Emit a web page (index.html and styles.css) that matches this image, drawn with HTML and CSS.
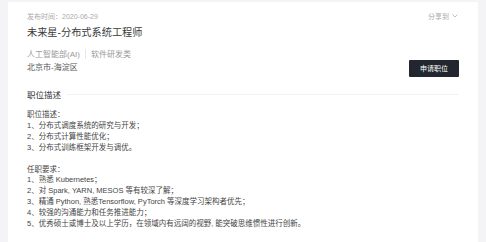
FILE: index.html
```html
<!DOCTYPE html>
<html lang="zh-CN">
<head>
    <meta charset="UTF-8">
    <meta name="viewport" content="width=device-width, initial-scale=1.0">
    <title>未来星-分布式系统工程师</title>
    <link rel="stylesheet" href="styles.css">
</head>
<body>

    <div class="page">
        <div class="card">
            <div class="top-row">
                <span class="publish">发布时间：2020-06-29</span>
                <span class="share">分享到
                    <svg width="6" height="4" viewBox="0 0 6 4"><path d="M0.5 0.5 L3 3 L5.5 0.5" fill="none" stroke="#b0b0b0" stroke-width="0.8"/></svg>
                </span>
            </div>

            <h1 class="title">未来星-分布式系统工程师</h1>

            <div class="tags">
                <span>人工智能部(AI)</span>
                <span class="divider"></span>
                <span>软件研发类</span>
            </div>

            <div class="apply-row">
                <span class="location">北京市-海淀区</span>
                <button class="apply-btn">申请职位</button>
            </div>

            <div class="section-title">
                <h2>职位描述</h2>
            </div>

            <div class="desc">
                <p>职位描述：</p>
                <p>1、分布式调度系统的研究与开发；</p>
                <p>2、分布式计算性能优化；</p>
                <p>3、分布式训练框架开发与调优。</p>
                <p class="blank">&nbsp;</p>
                <p>任职要求：</p>
                <p>1、熟悉 Kubernetes；</p>
                <p>2、对 Spark, YARN, MESOS 等有较深了解；</p>
                <p>3、精通 Python, 熟悉Tensorflow, PyTorch 等深度学习架构者优先；</p>
                <p>4、较强的沟通能力和任务推进能力；</p>
                <p>5、优秀硕士或博士及以上学历，在领域内有远阔的视野, 能突破思维惯性进行创新。</p>
            </div>
        </div>
    </div>

</body>
</html>
```

FILE: styles.css
```css
body {
    font-family: "Liberation Sans", "Noto Sans CJK SC", sans-serif;
    background-color: #f4f4f6;
    margin: 0;
    padding: 0;
    color: #333;
}

.page {
    padding: 2px 8px 0 8px;
    height: 240px;
}

.card {
    background-color: white;
    height: 100%;
    padding: 9px 19px 0 19px;
    box-sizing: border-box;
}

.top-row {
    display: flex;
    justify-content: space-between;
    align-items: center;
    height: 10px;
    font-size: 7px;
    color: #aaa;
}

.share {
    display: flex;
    align-items: center;
    gap: 3px;
    margin-right: 1px;
}

.title {
    margin: 5px 0 0 0;
    font-size: 10.2px;
    line-height: 14px;
    font-weight: normal;
    color: #3a3a3a;
}

.tags {
    display: flex;
    align-items: center;
    margin-top: 8.5px;
    font-size: 8px;
    line-height: 11px;
    color: #999;
}

.divider {
    width: 1px;
    height: 10px;
    background-color: #e6e6e6;
    margin: 0 5px;
}

.apply-row {
    display: flex;
    justify-content: space-between;
    align-items: center;
    margin-top: 0;
}

.location {
    font-size: 8px;
    line-height: 11px;
    color: #555;
    margin-bottom: 2px;
}

.apply-btn {
    width: 50px;
    height: 17px;
    padding: 0;
    background-color: #22262f;
    border: none;
    border-radius: 1px;
    color: white;
    font-family: inherit;
    font-size: 7px;
    cursor: pointer;
}

.section-title {
    display: flex;
    align-items: center;
    margin-top: 12px;
}

.section-title h2 {
    margin: 0;
    font-size: 8.5px;
    line-height: 12px;
    font-weight: normal;
    color: #333;
}

.section-title::after {
    content: "";
    flex: 1;
    height: 1px;
    background-color: #f2f2f2;
    margin-left: 6px;
}

.desc {
    margin-top: 9.5px;
    font-size: 7.5px;
    line-height: 10.9px;
    color: #444;
}

.desc p {
    margin: 0;
    white-space: nowrap;
}
```
